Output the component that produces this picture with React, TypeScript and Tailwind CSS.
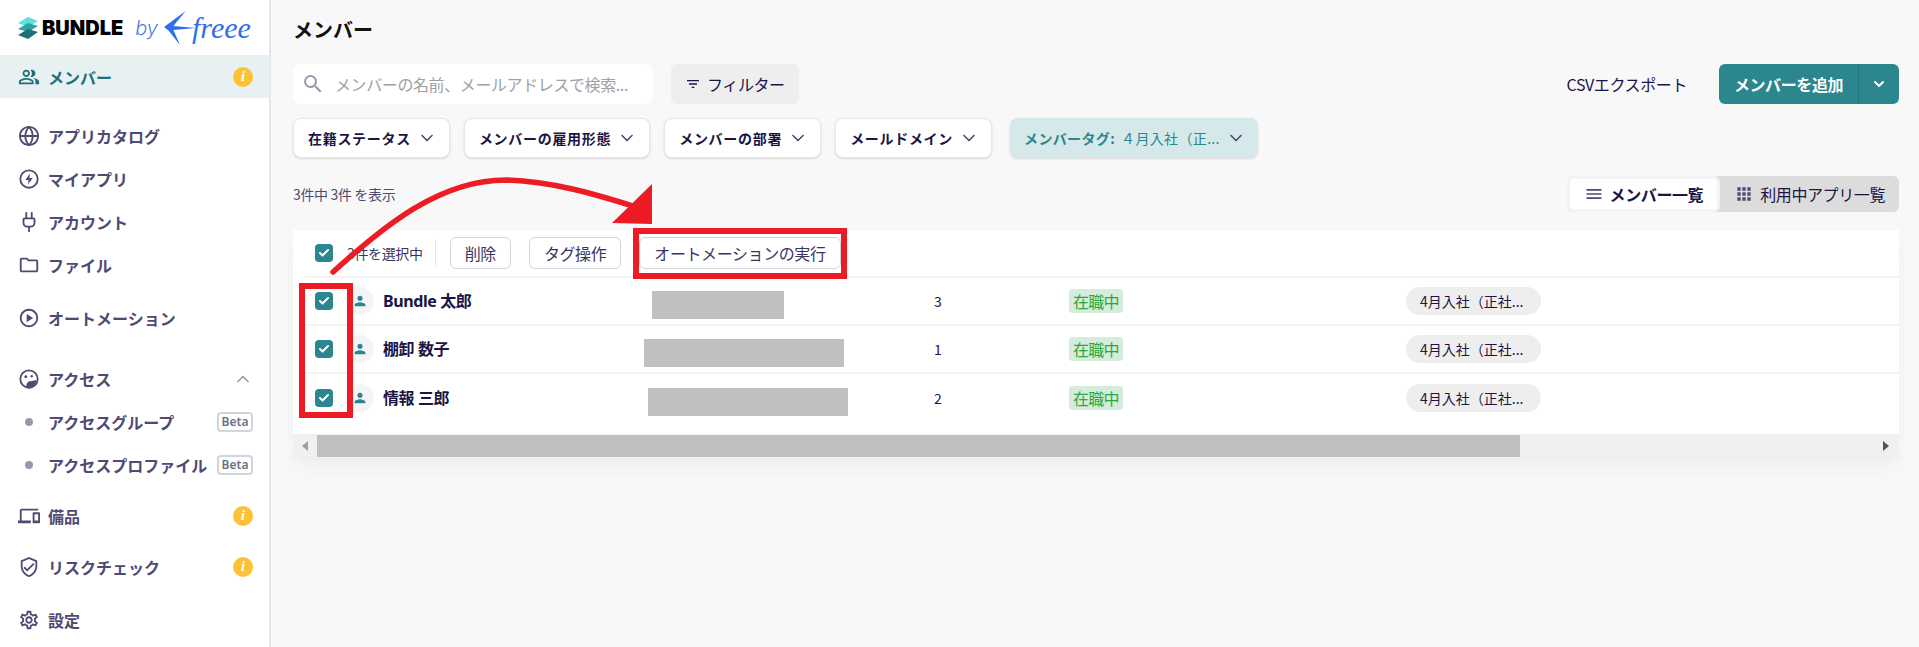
import type { ReactNode } from "react";
import { Check, ChevronDown, ChevronUp, Globe, Plug } from "lucide-react";
import {
  MdApps,
  MdFilterList,
  MdMenu,
  MdOutlineDevices,
  MdOutlineFolder,
  MdOutlinePeopleAlt,
  MdOutlinePlayCircle,
  MdOutlineSettings,
  MdOutlineVerifiedUser,
  MdPerson,
  MdSearch,
} from "react-icons/md";

function BoltIcon() {
  return (
    <svg viewBox="0 0 24 24" className="w-5.5 h-5.5" fill="none">
      <circle cx="12" cy="12" r="9.5" stroke="currentColor" strokeWidth="2" />
      <path d="M13 6 8 13H11.5L11 18 16 11H12.5Z" fill="currentColor" />
    </svg>
  );
}

function FaceIcon() {
  return (
    <svg viewBox="0 0 24 24" className="w-5.5 h-5.5" fill="none">
      <circle cx="12" cy="12" r="9.5" stroke="currentColor" strokeWidth="2" />
      <circle cx="8.5" cy="9.5" r="1.6" fill="currentColor" />
      <circle cx="15" cy="9" r="1.3" fill="currentColor" />
      <path d="M9 21C9 16.5 11 14.5 14 14.5L20 13C20 17 16 22 12 22Z" fill="currentColor" />
    </svg>
  );
}

function Info() {
  return (
    <span className="w-5 h-5 rounded-full bg-[#fcc233] text-white flex items-center justify-center font-['Liberation_Serif',serif] italic font-bold text-sm">
      i
    </span>
  );
}

function Beta() {
  return (
    <span className="w-9 h-5 border-2 border-gray-300 rounded text-xs font-semibold text-gray-500 flex items-center justify-center font-['Noto_Sans',sans-serif]">
      Beta
    </span>
  );
}

function Dot() {
  return (
    <span className="w-5.5 flex justify-center">
      <span className="w-2 h-2 rounded-full bg-[#9b98ad]" />
    </span>
  );
}

type NavItem = { label: string; icon: ReactNode; right?: ReactNode; className: string };

const nav: NavItem[] = [
  { label: "メンバー", icon: <MdOutlinePeopleAlt className="w-5.5 h-5.5" />, right: <Info />, className: "bg-[#e8f1f2] text-[#1f6f78]" },
  { label: "アプリカタログ", icon: <Globe className="w-5.5 h-5.5" />, className: "mt-4" },
  { label: "マイアプリ", icon: <BoltIcon />, className: "" },
  { label: "アカウント", icon: <Plug className="w-5.5 h-5.5" />, className: "" },
  { label: "ファイル", icon: <MdOutlineFolder className="w-5.5 h-5.5" />, className: "" },
  { label: "オートメーション", icon: <MdOutlinePlayCircle className="w-5.5 h-5.5" />, className: "mt-2.5" },
  { label: "アクセス", icon: <FaceIcon />, right: <ChevronUp className="w-5 h-5 text-[#9b98ad]" />, className: "mt-4.5" },
  { label: "アクセスグループ", icon: <Dot />, right: <Beta />, className: "" },
  { label: "アクセスプロファイル", icon: <Dot />, right: <Beta />, className: "" },
  { label: "備品", icon: <MdOutlineDevices className="w-5.5 h-5.5" />, right: <Info />, className: "mt-2" },
  { label: "リスクチェック", icon: <MdOutlineVerifiedUser className="w-5.5 h-5.5" />, right: <Info />, className: "mt-2" },
  { label: "設定", icon: <MdOutlineSettings className="w-5.5 h-5.5" />, className: "mt-2.5" },
];

function Logo() {
  return (
    <div className="h-[55px] flex items-center pl-4.5 gap-1">
      <svg viewBox="0 0 20 22" className="w-5 h-6">
        <path d="M10 0 20 4 10 10 0 6Z" fill="#5fe0e6" />
        <path d="M10 6 20 9 10 15 0 12Z" fill="#2fa39f" />
        <path d="M10 12 20 15 10 22 0 18Z" fill="#1f6f78" />
      </svg>
      <span className="font-['Inter',sans-serif] font-black text-xl text-black">BUNDLE</span>
      <span className="ml-2 font-['Inter',sans-serif] font-light italic text-xl text-[#4f7fe0]">by</span>
      <div className="ml-0.5 flex items-center">
        <svg viewBox="0 0 34 36" className="w-8 h-9 text-[#2f6fee]">
          <path d="M0 17 23 0 10 16 34 18 10 20 17 36 5 21Z" fill="currentColor" />
        </svg>
        <span className="-ml-1 font-['Liberation_Serif',serif] italic text-3xl text-[#2f6fee]">freee</span>
      </div>
    </div>
  );
}

function Sidebar() {
  return (
    <aside className="w-[271px] shrink-0 h-full bg-white border-r-2 border-gray-200 text-[#4f4a72]">
      <Logo />
      {nav.map((item) => (
        <div key={item.label} className={`h-[43px] flex items-center pl-4.5 pr-4 gap-2 font-semibold ${item.className}`}>
          {item.icon}
          <span className="flex-1 whitespace-nowrap">{item.label}</span>
          {item.right}
        </div>
      ))}
    </aside>
  );
}

function CheckBox() {
  return (
    <span className="w-4.5 h-4.5 rounded bg-[#2b868e] text-white flex items-center justify-center">
      <Check className="w-3 h-3" strokeWidth={4} />
    </span>
  );
}

function Chip({ label }: { label: string }) {
  return (
    <button className="h-10 pl-3.5 pr-3 bg-white border border-gray-200 rounded-lg shadow-sm flex items-center gap-1.5 text-sm tracking-wider font-bold text-[#1a1545]">
      {label}
      <ChevronDown className="w-5 h-5 text-[#4f4a72]" />
    </button>
  );
}

function ToolButton({ children }: { children: ReactNode }) {
  return (
    <button className="h-8 px-3.5 bg-white border border-gray-300 rounded-md text-base tracking-tight text-[#3a3560]">{children}</button>
  );
}

const rows = [
  { name: "Bundle 太郎", count: "3", bar: "ml-3 w-33", border: "border-b-2" },
  { name: "棚卸 数子", count: "1", bar: "ml-1 w-50", border: "border-b-2" },
  { name: "情報 三郎", count: "2", bar: "ml-2 w-50", border: "" },
];

function Table() {
  return (
    <div className="mt-4.5 bg-white shadow-lg shadow-gray-200/60">
      <div className="h-12 ml-3 pl-2.5 border-b-2 border-gray-100 flex items-center">
        <CheckBox />
        <span className="ml-3.5 text-sm tracking-tight text-[#3a3560] whitespace-nowrap">3件を選択中</span>
        <span className="ml-3 h-7 border-l border-gray-200" />
        <div className="ml-3.5 flex gap-4.5">
          <ToolButton>削除</ToolButton>
          <ToolButton>タグ操作</ToolButton>
          <ToolButton>オートメーションの実行</ToolButton>
        </div>
      </div>
      {rows.map((row) => (
        <div
          key={row.name}
          className={`grid grid-cols-[41px_37px_257px_294px_135px_337px_1fr] items-center h-12 ml-3 border-gray-100 ${row.border}`}
        >
          <span className="pl-2.5">
            <CheckBox />
          </span>
          <span className="w-7 h-7 rounded-full bg-gray-100 text-[#2b868e] flex items-center justify-center">
            <MdPerson className="w-4 h-4" />
          </span>
          <span className="text-base tracking-tight font-bold text-[#1a1545] font-['Noto_Sans','Noto_Sans_CJK_JP',sans-serif]">{row.name}</span>
          <span className={`h-7 mt-2 bg-[#c0c0c0] ${row.bar}`} />
          <span className="text-sm text-[#1a1545]">{row.count}</span>
          <span>
            <span className="inline-block px-1 rounded bg-[#d4ecd9] text-base tracking-tighter leading-6 text-[#2aa846]">在職中</span>
          </span>
          <span>
            <span className="inline-block pl-3.5 pr-4.5 rounded-full bg-[#eeeeee] text-sm leading-7 text-[#1a1545]">4月入社（正社...</span>
          </span>
        </div>
      ))}
      <div className="h-3" />
      <div className="h-6 bg-[#f0f0f0] flex items-center">
        <span className="w-6 flex justify-center">
          <svg viewBox="0 0 6 10" className="w-1.5 h-2.5 fill-gray-400">
            <path d="M6 0V10L0 5Z" />
          </svg>
        </span>
        <span className="w-[1203px] h-5.5 bg-[#c0c0c0]" />
        <span className="ml-auto mr-2.5">
          <svg viewBox="0 0 6 10" className="w-1.5 h-2.5 fill-gray-600">
            <path d="M0 0V10L6 5Z" />
          </svg>
        </span>
      </div>
    </div>
  );
}

function Annotations() {
  return (
    <svg className="absolute inset-0 w-full h-full pointer-events-none" fill="none">
      <rect x="302" y="286" width="48" height="129" stroke="#ed1c24" strokeWidth="6" />
      <rect x="636" y="231" width="208" height="45" stroke="#ed1c24" strokeWidth="6" />
      <path d="M333 272C385 225 440 180 506 180C550 181 595 194 636 207" stroke="#ed1c24" strokeWidth="5.5" strokeLinecap="round" />
      <path d="M652 184 612 223 652 224Z" fill="#ed1c24" />
    </svg>
  );
}

export default function App() {
  return (
    <div className="relative h-screen flex overflow-hidden bg-[#f8f8f8] font-['Noto_Sans_CJK_JP',sans-serif]">
      <Sidebar />
      <main className="flex-1 min-w-0 pl-5.5 pr-5">
        <h1 className="pt-4 text-xl leading-7 font-bold text-[#111]">メンバー</h1>

        <div className="mt-5 flex items-center">
          <div className="w-90 h-10 bg-white rounded-lg flex items-center px-2 gap-2.5 text-base tracking-tight text-neutral-400">
            <MdSearch className="w-6 h-6 text-[#9b98ad]" />
            <span className="whitespace-nowrap">メンバーの名前、メールアドレスで検索...</span>
          </div>
          <button className="ml-4.5 h-10 px-3.5 bg-[#eeeeee] rounded-md flex items-center gap-1.5 text-base tracking-tight text-[#1a1545]">
            <MdFilterList className="w-4 h-4" />
            フィルター
          </button>
          <div className="ml-auto flex items-center gap-8">
            <span className="text-base tracking-tight text-[#1a1545]">CSVエクスポート</span>
            <div className="h-10 flex bg-[#2b868e] rounded-md text-white">
              <button className="w-35 font-bold tracking-tight border-r border-[#25757c]">メンバーを追加</button>
              <button className="w-10 flex items-center justify-center">
                <ChevronDown className="w-4 h-4" strokeWidth={3} />
              </button>
            </div>
          </div>
        </div>

        <div className="mt-3.5 flex gap-3.5">
          <Chip label="在籍ステータス" />
          <Chip label="メンバーの雇用形態" />
          <Chip label="メンバーの部署" />
          <Chip label="メールドメイン" />
          <button className="ml-1 h-10 pl-3.5 pr-3 bg-[#d5e8ea] rounded-lg shadow-sm flex items-center gap-1.5 text-sm tracking-wide text-[#2b868e]">
            <span className="font-bold">メンバータグ:</span>
            <span>４月入社（正...</span>
            <ChevronDown className="w-5 h-5 text-[#4f4a72]" />
          </button>
        </div>

        <div className="mt-4.5 h-9 flex items-center justify-between">
          <span className="text-sm tracking-tight text-[#4f4a72]">3件中 3件 を表示</span>
          <div className="h-9 flex bg-[#dcdcdc] rounded-md tracking-tight">
            <div className="px-3.5 bg-white border-[3px] border-gray-100 rounded-md flex items-center gap-1.5 font-bold text-[#1a1545]">
              <MdMenu className="w-5 h-5 text-[#4f4a72]" />
              メンバー一覧
            </div>
            <div className="px-3.5 flex items-center gap-1.5 text-[#1a1545]">
              <MdApps className="w-5 h-5 text-[#4f4a72]" />
              利用中アプリ一覧
            </div>
          </div>
        </div>

        <Table />
      </main>
      <Annotations />
    </div>
  );
}
